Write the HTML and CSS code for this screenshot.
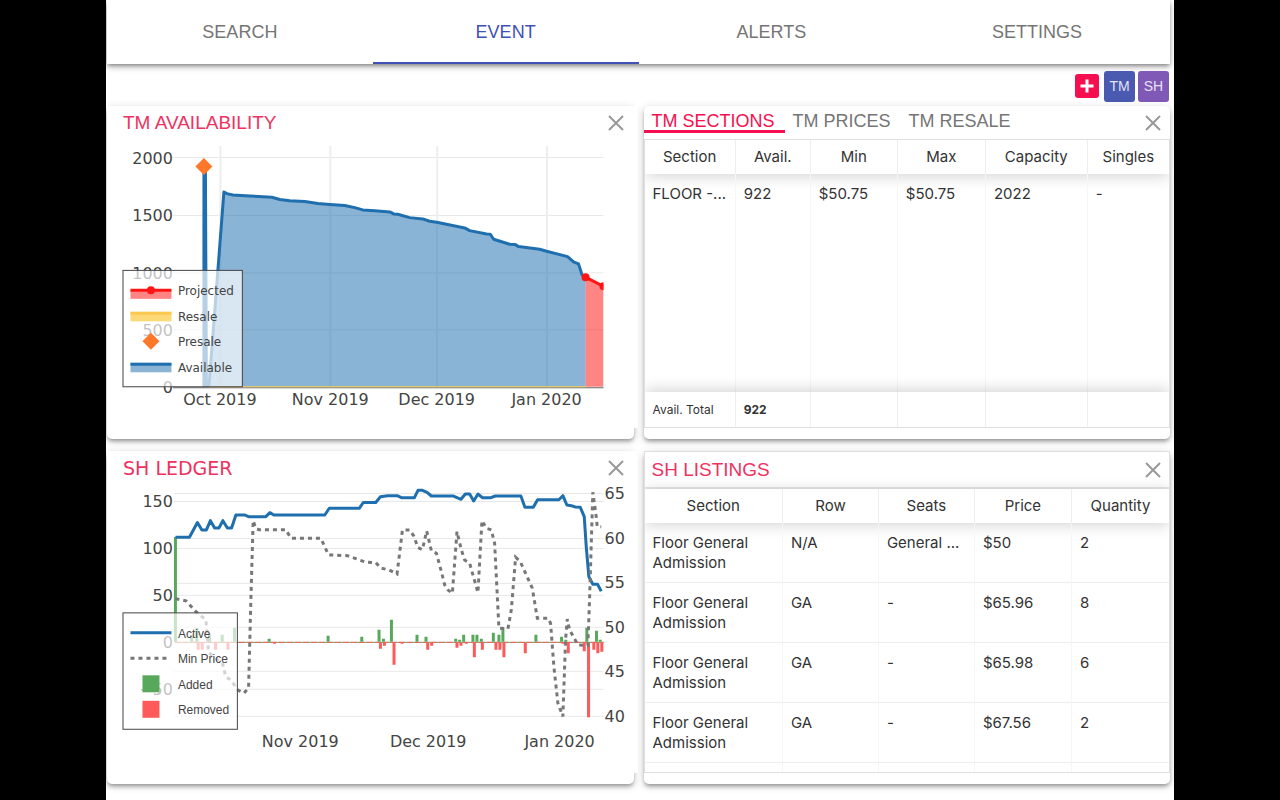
FILE: index.html
```html
<!DOCTYPE html>
<html lang="en">
<head>
<meta charset="utf-8">
<title>Event</title>
<link rel="stylesheet" href="styles.css">
</head>
<body>
<div class="app">
  <nav class="nav">
    <button class="nav-tab" type="button">SEARCH</button>
    <button class="nav-tab nav-tab-active" type="button" aria-current="page">EVENT</button>
    <button class="nav-tab" type="button">ALERTS</button>
    <button class="nav-tab" type="button">SETTINGS</button>
  </nav>

  <div class="toolbar">
    <button class="chip chip-add" type="button" aria-label="Add">
      <svg width="14" height="14" viewBox="0 0 14 14" aria-hidden="true"><path d="M7 0.500V13.500M0.500 7H13.500" stroke="#fff" stroke-width="3" fill="none"/></svg>
    </button>
    <button class="chip chip-tm" type="button">TM</button>
    <button class="chip chip-sh" type="button">SH</button>
  </div>

  <main class="grid">
    <section class="card">
      <div class="chart-body">
        <header class="card-head">
          <h2 class="title">TM AVAILABILITY</h2>
          <button class="close" type="button" aria-label="Close"><svg width="16" height="16" viewBox="0 0 16 16" aria-hidden="true"><path d="M1 1L15 15M15 1L1 15"/></svg></button>
        </header>
        <svg class="chart" viewBox="107 140 531 288" role="img" aria-label="TM availability chart">
          <clipPath id="plot1"><rect x="175" y="146" width="429" height="243"/></clipPath>
          <path class="grid-line" d="M173 157.500H604M173 215.500H604M173 273H604M173 330H604"/>
          <path class="grid-line grid-wide" d="M220.500 146V387M330.500 146V387M437.500 146V387M547.500 146V387"/>
          <g class="axis axis-end">
            <text x="173" y="164">2000</text><text x="173" y="221">1500</text><text x="173" y="279">1000</text><text x="173" y="336">500</text><text x="173" y="393">0</text>
          </g>
          <g class="axis axis-mid">
            <text x="220" y="405">Oct 2019</text><text x="330.500" y="405">Nov 2019</text><text x="437" y="405">Dec 2019</text><text x="547" y="405">Jan 2020</text>
          </g>
          <g clip-path="url(#plot1)">
            <path class="fill-blue" d="M204 387L204.500 167L206.500 387L209 387L224 192L233 195L250 196L272 197.300L280 199.500L290 200.700L305 201.500L318 203.500L330 204.500L345 205.500L355 207.700L363 210L375 210.800L390 212L394 214L398 214.300L410 217.700L423 219L430 221.300L437 222.300L465 228L470 230.700L487 234L490.700 234.300L494 239.300L510 244.300L515.700 244.700L519 246.700L540 249.300L547 251.300L568 256.700L574 262L579 264L582.500 275L586 277.300V387Z"/>
            <path class="fill-red" d="M586 277.300L604 286.500V387H586Z"/>
            <path class="line-blue" d="M204 387L204 167L205.500 167L206.500 387M209 387L224 192L227 193.700L233 195L250 196L272 197.300L280 199.500L290 200.700L305 201.500L318 203.500L330 204.500L345 205.500L355 207.700L363 210L375 210.800L390 212L394 214L398 214.300L410 217.700L423 219L430 221.300L437 222.300L465 228L470 230.700L487 234L490.700 234.300L494 239.300L510 244.300L515.700 244.700L519 246.700L540 249.300L547 251.300L568 256.700L574 262L579 264L582.500 275L586 277.300"/>
            <path class="line-red" d="M586 277.300L604 286.500"/>
            <circle cx="586" cy="277.300" r="4" fill="#ff1414"/><circle cx="604" cy="286.500" r="4" fill="#ff1414"/>
          </g>
          <path d="M173 388H604" stroke="#666" fill="none"/>
          <path d="M209 387H586" stroke="#f2c84b" fill="none"/>
          <path d="M204 158L212.500 166.500L204 175L195.500 166.500Z" fill="#ff7728"/>
          <rect class="legend-box" x="123" y="270.500" width="119.500" height="116.500"/>
          <rect class="fill-red" x="130.500" y="290" width="41" height="9"/>
          <path class="line-red" d="M130.500 290.500H171.500"/><circle cx="151" cy="290.500" r="4" fill="#ff1414"/>
          <rect x="130.500" y="312" width="41" height="9.500" fill="#fcd976"/>
          <path d="M130.500 313.500H171.500" stroke="#fbc94f" stroke-width="3" fill="none"/>
          <path d="M151 333L159.500 341.500L151 350L142.500 341.500Z" fill="#ff7728"/>
          <rect class="fill-blue" x="130.500" y="363" width="41" height="9.500"/>
          <path class="line-blue" d="M130.500 364.500H171.500"/>
          <g class="legend legend-wide">
            <text x="178" y="295">Projected</text><text x="178" y="321">Resale</text><text x="178" y="346">Presale</text><text x="178" y="372">Available</text>
          </g>
        </svg>
      </div>
    </section>

    <section class="card">
      <header class="card-head card-tabs">
        <div class="tabs">
          <button class="tab tab-active" type="button" aria-pressed="true">TM SECTIONS</button>
          <button class="tab" type="button">TM PRICES</button>
          <button class="tab" type="button">TM RESALE</button>
        </div>
        <button class="close" type="button" aria-label="Close"><svg width="16" height="16" viewBox="0 0 16 16" aria-hidden="true"><path d="M1 1L15 15M15 1L1 15"/></svg></button>
      </header>
      <div class="table-box">
        <table class="table sections">
          <colgroup><col class="s1"><col class="s2"><col class="s3"><col class="s4"><col class="s5"><col class="s6"></colgroup>
          <thead><tr><th>Section</th><th>Avail.</th><th>Min</th><th>Max</th><th>Capacity</th><th>Singles</th></tr></thead>
          <tbody><tr><td class="short">FLOOR -...</td><td>922</td><td>$50.75</td><td>$50.75</td><td>2022</td><td>-</td></tr></tbody>
          <tfoot><tr><td>Avail. Total</td><td><strong>922</strong></td><td></td><td></td><td></td><td></td></tr></tfoot>
        </table>
      </div>
    </section>

    <section class="card">
      <div class="chart-body">
        <header class="card-head">
          <h2 class="title title-wide">SH LEDGER</h2>
          <button class="close" type="button" aria-label="Close"><svg width="16" height="16" viewBox="0 0 16 16" aria-hidden="true"><path d="M1 1L15 15M15 1L1 15"/></svg></button>
        </header>
        <svg class="chart" viewBox="107 485 531 288" role="img" aria-label="SH ledger chart">
          <path class="grid-line" d="M174 493.500H604M174 501.500H604M174 538.500H604M174 548.500H604M174 583.500H604M174 595.500H604M174 627.500H604M174 671.500H604M174 689.500H604M174 716.500H604"/>
          <g class="axis axis-end">
            <text x="173" y="507">150</text><text x="173" y="554">100</text><text x="173" y="601">50</text><text x="173" y="648">0</text><text x="173" y="695">−50</text>
          </g>
          <g class="axis">
            <text x="605" y="499">65</text><text x="605" y="544">60</text><text x="605" y="588">55</text><text x="605" y="633">50</text><text x="605" y="677">45</text><text x="605" y="722">40</text>
          </g>
          <g class="axis axis-mid">
            <text x="300.500" y="747">Nov 2019</text><text x="428.500" y="747">Dec 2019</text><text x="560" y="747">Jan 2020</text>
          </g>
          <path d="M175 642.500H604" stroke="#58a85c" fill="none"/>
          <path d="M175 642.500H604" stroke="#ff5a5a" stroke-dasharray="6 2" fill="none"/>
          <path class="bars-green" d="M175.500 642V537M191.700 642V635M197 642V628M209.700 642V635M222.300 642V635M234.700 642V628M269.300 642V639M328.300 642V636M362 642V637M379.300 642V630M383.700 642V639M391.700 642V620M417.300 642V635M426.300 642V637M456 642V639M460 642V640M464 642V635M473.300 642V635M477.300 642V635M481.700 642V639M493.700 642V633M499.300 642V635M503.300 642V628M536.300 642V635M562 642V637M566.300 642V640M587.300 642V628M597 642V631M600.700 642V640"/>
          <path class="bars-red" d="M198.300 643V650M202.300 643V650M215.700 643V650M228 643V650M274.700 643V644M380.700 643V649M384.700 643V646M394.300 643V665M402.300 643V644M428 643V650M432 643V646M457.300 643V648M461.300 643V646M466.700 643V644M474.700 643V657.500M482.700 643V650M496.300 643V650M500.300 643V650M504.300 643V657.500M525.700 643V653.500M563.300 643V644M568.700 643V653.500M584.700 643V651.500M589 643V717.500M594.300 643V650M598.300 643V653.500M602.300 643V652"/>
          <path class="line-blue" d="M175.500 537.300H189.500L197.500 522.500L202 530H206.500L210.500 520.700L214.700 528H219L223 520.700L227.500 528H231.700L236 515H244.500L248.700 516.700H266L270 512.700L274 515H325L329.500 508.300H359.500L363.500 502.500H376L380.700 496.700L388 495.700H397.500L401.700 497.700H414.700L418.300 490.300H422.700L427.300 492.300L431.700 496H453.300L461.300 499.300L465.700 494H470L474 501L478.300 494L482.700 497.700H491.300L495.700 496H521.300L525.300 507.300H533.700L538 499.700H559.300L563.300 495.700L567.300 505L571.700 505.700L575.700 507L580.700 507.300L584.700 516.700L586.700 546.700L589.300 576.700L593.300 584.300H598L601.700 591.300"/>
          <path class="line-dots" d="M175.500 598.700L186 601L196 611.700L206 620L208.700 652.700L222.700 664L226 677.300L231 680L237.700 690L244 693.300L248.700 688.500L251 600L253.300 520.700L256 528.700L259.300 529.700H286L291 538.300H321L328.700 555L347.700 555.700L366 562.300L376 562.700L380.700 568L389.300 570L397.300 574L400.700 546.700L402.700 530H410L414 536L418.300 547.700L422.700 549.700L427 531L431.700 551L436.700 553.300L441.700 571.700L445 585L448.300 590L452.700 593.300L457.300 531.700L461.700 550L465 560L470 563.300L478.300 592.700L482.300 520.700L486.700 528.300L491.700 530L495 543.300L499.300 628.300L508.300 629L511.700 610L516 557.300L520.700 561.700L532.700 588.300L537.700 618.300H548.300L551 623.300L554.300 666.700L558.300 703.300L563.300 716.700L566 640L567.700 619.300L570 630L578.300 645L588.300 645.700L590 600L593.300 492.300L596.700 516.700L597.700 526.700H601.700"/>
          <rect class="legend-box" x="123" y="613" width="114.500" height="116.500"/>
          <path class="line-blue" d="M130.500 633H171.500"/>
          <path class="line-dots" d="M130.500 658.500H168"/>
          <rect x="142.500" y="675.500" width="17" height="17" fill="#58a85c"/>
          <rect x="142.500" y="701" width="17" height="17" fill="#ff5a5a"/>
          <g class="legend">
            <text x="178" y="638">Active</text><text x="178" y="663">Min Price</text><text x="178" y="689">Added</text><text x="178" y="714">Removed</text>
          </g>
        </svg>
      </div>
    </section>

    <section class="card">
      <div class="table-box table-box-full">
        <header class="card-head card-head-listings">
          <h2 class="title">SH LISTINGS</h2>
          <button class="close" type="button" aria-label="Close"><svg width="16" height="16" viewBox="0 0 16 16" aria-hidden="true"><path d="M1 1L15 15M15 1L1 15"/></svg></button>
        </header>
        <table class="table listings">
          <colgroup><col class="l1"><col class="l2"><col class="l3"><col class="l4"><col class="l5"></colgroup>
          <thead><tr><th>Section</th><th>Row</th><th>Seats</th><th>Price</th><th>Quantity</th></tr></thead>
          <tbody>
            <tr><td>Floor General Admission</td><td>N/A</td><td class="short">General ...</td><td>$50</td><td>2</td></tr>
            <tr><td>Floor General Admission</td><td>GA</td><td>-</td><td>$65.96</td><td>8</td></tr>
            <tr><td>Floor General Admission</td><td>GA</td><td>-</td><td>$65.98</td><td>6</td></tr>
            <tr><td>Floor General Admission</td><td>GA</td><td>-</td><td>$67.56</td><td>2</td></tr>
            <tr class="peek"><td></td><td></td><td></td><td></td><td></td></tr>
          </tbody>
        </table>
      </div>
    </section>
  </main>
</div>
</body>
</html>
```
FILE: styles.css
```css
* { box-sizing: border-box; }

body {
  margin: 0;
  padding: 0 106px;
  background: #000;
  color: #333;
  font-family: "Liberation Sans", Arial, sans-serif;
}

button {
  margin: 0;
  padding: 0;
  border: 0;
  background: none;
  font-family: inherit;
  cursor: pointer;
}

.app {
  min-height: 100vh;
  padding: 0 4px 0 1px;
  background: #fff;
  overflow: hidden;
}

.nav {
  display: flex;
  height: 64px;
  background: #fff;
  box-shadow: 0 2px 4px -1px rgba(0, 0, 0, .4), 0 4px 5px rgba(0, 0, 0, .14), 0 1px 10px rgba(0, 0, 0, .12);
}

.nav-tab {
  flex: 1;
  border-top: 2px solid transparent;
  border-bottom: 2px solid transparent;
  color: #757575;
  font-size: 18px;
}

.nav-tab-active {
  border-bottom-color: #3f51b5;
  color: #3f51b5;
}

.toolbar {
  display: flex;
  align-items: center;
  justify-content: flex-end;
  gap: 3px;
  height: 42px;
  padding: 2px 1px 0 0;
}

.chip {
  width: 31px;
  height: 31px;
  border-radius: 3px;
  color: #e4e2f4;
  font-size: 14px;
}

.chip-add {
  display: grid;
  place-items: center;
  width: 24px;
  height: 24px;
  margin-right: 2px;
  background: #f50f50;
}

.chip-tm { background: #4a5ab0; }
.chip-sh { background: #8058b5; }

.grid {
  display: grid;
  grid-template-columns: repeat(2, minmax(0, 1fr));
  gap: 12px 10px;
}

.card {
  display: flex;
  flex-direction: column;
  min-height: 333px;
  padding-bottom: 11px;
  border-radius: 5px;
  background: #fff;
  box-shadow: 0 3px 4px -1px rgba(0, 0, 0, .35), 0 2px 8px rgba(0, 0, 0, .18);
}

.chart-body {
  margin-right: -4px;
  background: #fff;
}

.card-head {
  display: flex;
  align-items: center;
  justify-content: space-between;
  height: 34px;
  padding: 0 14px 0 16px;
}

.title {
  margin: 0;
  color: #f0325f;
  font-size: 19px;
  font-weight: 400;
}

.title-wide { font-family: "DejaVu Sans", Verdana, sans-serif; }

.close {
  width: 16px;
  height: 16px;
}

.close svg {
  display: block;
  fill: none;
  stroke: #999;
  stroke-width: 2;
}

.chart {
  display: block;
  width: 100%;
  height: auto;
}

.grid-line { fill: none; stroke: #e8e8e8; }
.grid-wide { stroke: #eee; stroke-width: 2; }
.axis { fill: #444; font: 16px "DejaVu Sans", Verdana, sans-serif; }
.axis-end { text-anchor: end; }
.axis-mid { text-anchor: middle; }
.line-blue { fill: none; stroke: #1f6fae; stroke-width: 3; stroke-linejoin: round; }
.line-red { fill: none; stroke: #ff1414; stroke-width: 3; }
.line-dots { fill: none; stroke: #777; stroke-width: 3; stroke-dasharray: 4 4; }
.fill-blue { fill: #1f6fae; fill-opacity: .52; }
.fill-red { fill: #ff1414; fill-opacity: .52; }
.bars-green { fill: none; stroke: #58a85c; stroke-width: 3; }
.bars-red { fill: none; stroke: #ff5a5a; stroke-width: 3; }
.legend-box { fill: #fff; fill-opacity: .68; stroke: #444; stroke-width: 1; }
.legend { fill: #444; font: 12px "Liberation Sans", Arial, sans-serif; }
.legend-wide { font-family: "DejaVu Sans", Verdana, sans-serif; }

.card-tabs {
  align-items: stretch;
  height: 33px;
  padding: 0 9px 0 0;
}

.card-tabs .close { align-self: center; }

.tabs {
  display: flex;
  align-items: flex-start;
}

.tab {
  height: 27px;
  padding: 6px 10px 0 8px;
  border-bottom: 3px solid transparent;
  color: #757575;
  font-size: 18px;
  line-height: 18px;
}

.tab-active {
  border-bottom-color: #f50f50;
  color: #f50f50;
}

.table-box {
  display: flex;
  flex-direction: column;
  flex: 1;
  border: 1px solid #e0e0e0;
  overflow: hidden;
}

.card-head-listings {
  height: 37px;
  padding: 0 8px 0 7px;
  border-bottom: 2px solid #e6e6e6;
}

.table {
  width: 100%;
  border-collapse: separate;
  border-spacing: 0;
  table-layout: fixed;
  color: #333;
  font: 15px/20px Inter, sans-serif;
}

.sections { flex: 1; height: 287px; }

.table th {
  height: 34px;
  padding: 0;
  border-right: 1px solid #eee;
  font-weight: 400;
}

.table td {
  padding: 10px 6px 9px 8px;
  border-right: 1px solid #f6f6f6;
  vertical-align: top;
  text-align: left;
}

.table th:last-child,
.table td:last-child { border-right: 0; }

.table .short { white-space: nowrap; }

.table thead { box-shadow: 0 2px 15px rgba(0, 0, 0, .18); }
.table tfoot { box-shadow: 0 -2px 15px rgba(0, 0, 0, .18); }

.table tfoot td {
  height: 35px;
  padding: 8px 6px 7px 8px;
  border-right-color: #eee;
  font-size: 12px;
}

.listings tbody td { border-bottom: 1px solid #eee; }
.listings .peek td { height: 9px; padding: 0; border-bottom: 0; }

.s1 { width: 17.4%; }
.s2 { width: 14.3%; }
.s3 { width: 16.6%; }
.s4 { width: 16.8%; }
.s5 { width: 19.4%; }
.s6 { width: 15.5%; }

.l1 { width: 26.4%; }
.l2 { width: 18.3%; }
.l3 { width: 18.3%; }
.l4 { width: 18.5%; }
.l5 { width: 18.5%; }
```
